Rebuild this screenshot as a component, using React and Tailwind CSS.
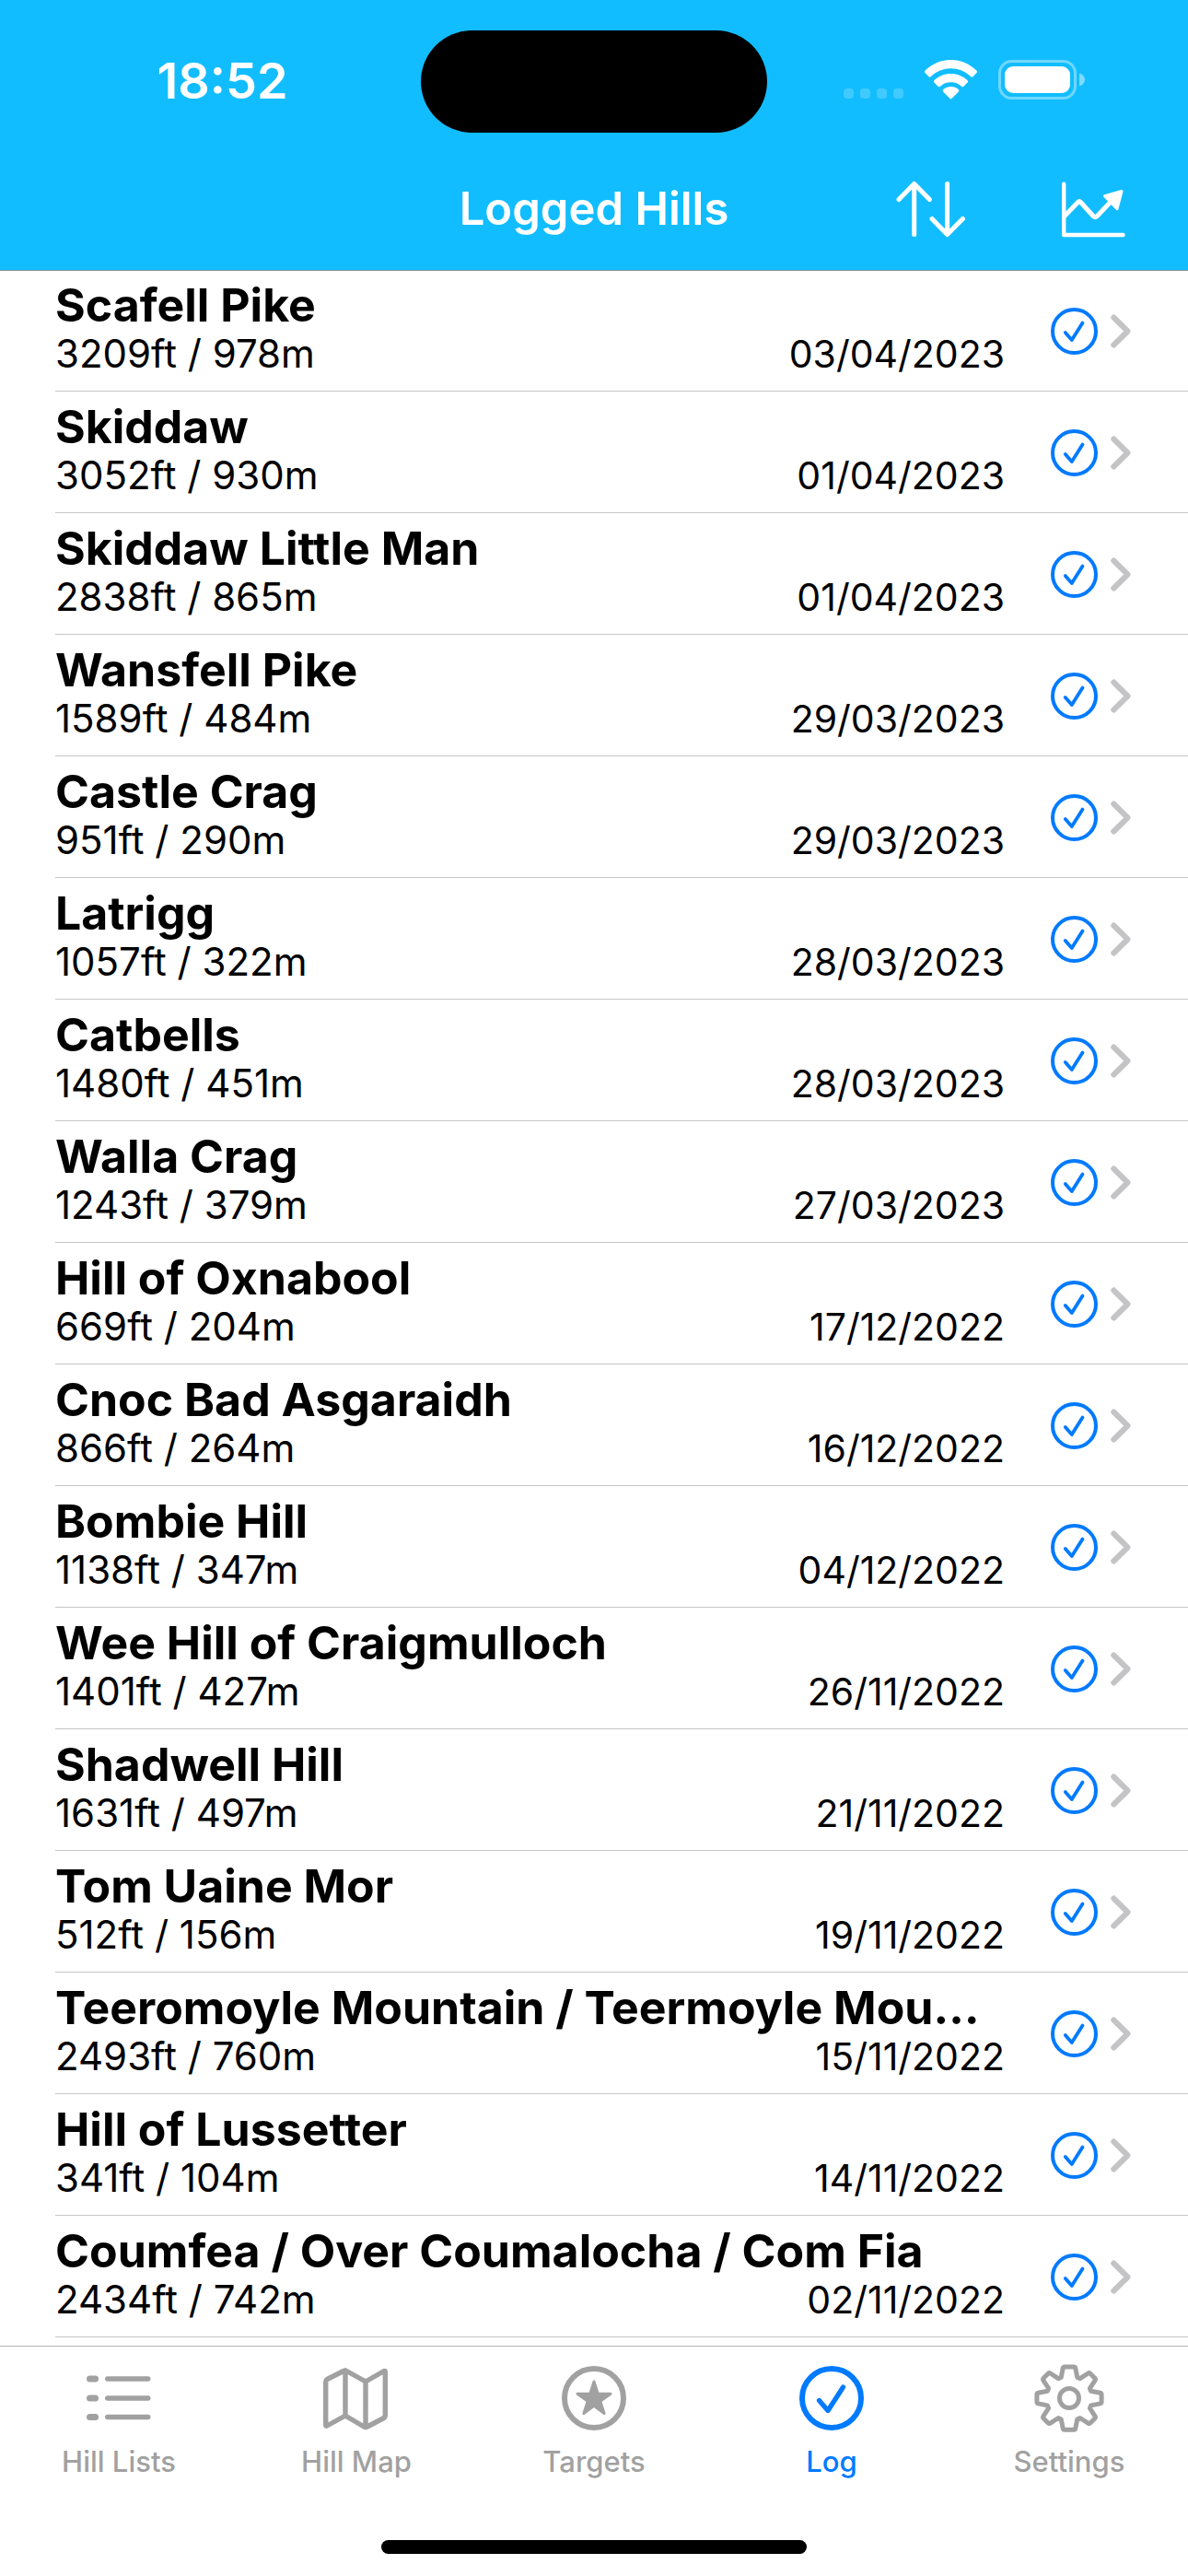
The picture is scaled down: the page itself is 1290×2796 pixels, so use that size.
const hills = [
  ["Scafell Pike", "3209ft / 978m", "03/04/2023"],
  ["Skiddaw", "3052ft / 930m", "01/04/2023"],
  ["Skiddaw Little Man", "2838ft / 865m", "01/04/2023"],
  ["Wansfell Pike", "1589ft / 484m", "29/03/2023"],
  ["Castle Crag", "951ft / 290m", "29/03/2023"],
  ["Latrigg", "1057ft / 322m", "28/03/2023"],
  ["Catbells", "1480ft / 451m", "28/03/2023"],
  ["Walla Crag", "1243ft / 379m", "27/03/2023"],
  ["Hill of Oxnabool", "669ft / 204m", "17/12/2022"],
  ["Cnoc Bad Asgaraidh", "866ft / 264m", "16/12/2022"],
  ["Bombie Hill", "1138ft / 347m", "04/12/2022"],
  ["Wee Hill of Craigmulloch", "1401ft / 427m", "26/11/2022"],
  ["Shadwell Hill", "1631ft / 497m", "21/11/2022"],
  ["Tom Uaine Mor", "512ft / 156m", "19/11/2022"],
  ["Teeromoyle Mountain / Teermoyle Mou…", "2493ft / 760m", "15/11/2022"],
  ["Hill of Lussetter", "341ft / 104m", "14/11/2022"],
  ["Coumfea / Over Coumalocha / Com Fia", "2434ft / 742m", "02/11/2022"],
];

function StatusIcons() {
  return (
    <svg width="264" height="48" viewBox="916 64 264 48" fill="none" aria-hidden="true">
      <g fill="#fff" fillOpacity="0.2">
        <rect x="916" y="96" width="11" height="11" rx="4" />
        <rect x="934" y="96" width="11" height="11" rx="4" />
        <rect x="952" y="96" width="11" height="11" rx="4" />
        <rect x="970" y="96" width="11" height="11" rx="4" />
      </g>
      <g fill="#fff">
        <path d="M1032.500 65c10.800 0 20.500 4.300 27.800 11.500a2 2 0 0 1 0 2.800l-3.600 3.700a1.800 1.800 0 0 1-2.600 0a31 31 0 0 0-43.200 0a1.800 1.800 0 0 1-2.600 0l-3.600-3.700a2 2 0 0 1 0-2.800C1012 69.300 1021.700 65 1032.500 65z" />
        <path d="M1032.500 80c6.900 0 13.200 2.700 17.900 7a2 2 0 0 1 0 2.800l-3.900 3.900a1.800 1.800 0 0 1-2.500 0a17 17 0 0 0-23 0a1.800 1.800 0 0 1-2.500 0l-3.900-3.900a2 2 0 0 1 0-2.800a26.500 26.500 0 0 1 17.900-7z" />
        <path d="M1032.500 94c3.200 0 6.100 1.200 8.200 3a1.800 1.800 0 0 1 0 2.700l-7 7a1.700 1.700 0 0 1-2.400 0l-7-7a1.800 1.800 0 0 1 0-2.700a12.500 12.500 0 0 1 8.200-3z" />
      </g>
      <rect x="1085.500" y="66.500" width="82" height="40" rx="13" stroke="#fff" strokeOpacity="0.4" strokeWidth="3" />
      <rect x="1091" y="72" width="71" height="29" rx="9" fill="#fff" />
      <path d="M1172 79.500c3.500 1 6 4 6 7s-2.500 6-6 7z" fill="#fff" fillOpacity="0.45" />
    </svg>
  );
}

function SortIcon() {
  return (
    <svg width="76" height="66" viewBox="972 194 76 66" fill="none" stroke="#fff" strokeWidth="5" strokeLinecap="round" strokeLinejoin="round" aria-hidden="true">
      <path d="M991.700 254.500V200M975 216.500l16.700-17l16.700 17M1027.600 199.500v54M1011 237.500l16.600 17l16.800-17" />
    </svg>
  );
}

function ChartIcon() {
  return (
    <svg width="72" height="66" viewBox="1151 194 72 66" fill="none" stroke="#fff" strokeWidth="5" strokeLinecap="round" strokeLinejoin="round" aria-hidden="true">
      <path d="M1155.200 199.700V255H1219.500" strokeWidth="4.400" />
      <path d="M1156 234.500l14.500-15q1.500-1.500 3 0l14 15.500q1.700 1.500 3.400 0L1208 217" />
      <path d="M1218 207.500l-18.500 5.200l13.500 14z" fill="#fff" strokeWidth="3" />
    </svg>
  );
}

function RowCheck() {
  return (
    <svg width="51" height="51" viewBox="0 0 51 51" fill="none" stroke="#007aff" strokeWidth="4" strokeLinecap="round" strokeLinejoin="round" aria-hidden="true">
      <circle cx="25.500" cy="25.500" r="23.500" />
      <path d="M15.800 27l7 8L34.500 16.500" strokeWidth="3.800" />
    </svg>
  );
}

function Chevron() {
  return (
    <svg width="22" height="37" viewBox="0 0 22 37" fill="none" stroke="#c4c4c6" strokeWidth="6" strokeLinecap="round" strokeLinejoin="round" aria-hidden="true">
      <path d="M3.300 3.500l15.200 15l-15.200 15" />
    </svg>
  );
}

function ListIcon() {
  return (
    <svg width="76" height="76" viewBox="90 2565 76 76" fill="currentColor" aria-hidden="true">
      {[2582, 2603, 2623.5].map((y) => (
        <g key={y}>
          <rect x="93" y={y - 3.5} width="13" height="7" rx="3.500" />
          <rect x="113" y={y - 2.8} width="49.500" height="5.600" rx="2.800" />
        </g>
      ))}
    </svg>
  );
}

function MapIcon() {
  return (
    <svg width="76" height="76" viewBox="349 2565 76 76" fill="none" stroke="currentColor" strokeWidth="5.400" strokeLinecap="round" strokeLinejoin="round" aria-hidden="true">
      <path d="M353.700 2585q0-1.500 1.500-2.500L373 2573.500q1.700-1 3.400 0L397 2585l20-11.500q1.300-.5 1.300 1V2622q0 1.500-1.500 2.500L398.700 2634q-1.700 1-3.400 0L375 2622l-20 11q-1.300.5-1.300-1zM375 2573v49M397 2585v49" />
    </svg>
  );
}

function StarIcon() {
  return (
    <svg width="76" height="76" viewBox="0 0 76 76" fill="none" aria-hidden="true">
      <circle cx="38" cy="38" r="32" stroke="currentColor" strokeWidth="6" />
      <path d="M38 20l4.200 13.200h13.800l-11.200 8.100l4.300 13.200L38 46.400l-11.100 8.100l4.300-13.200L20 33.200h13.800z" fill="currentColor" stroke="currentColor" strokeWidth="3" strokeLinejoin="round" />
    </svg>
  );
}

function LogIcon() {
  return (
    <svg width="76" height="76" viewBox="0 0 76 76" fill="none" stroke="currentColor" strokeLinecap="round" strokeLinejoin="round" aria-hidden="true">
      <circle cx="38" cy="38" r="32" strokeWidth="6" />
      <path d="M24.500 40.500L34 51.500L50.500 26" strokeWidth="5.200" />
    </svg>
  );
}

function GearIcon() {
  return (
    <svg width="76" height="76" viewBox="1122.500 2565.500 76 76" fill="none" stroke="currentColor" strokeWidth="5" strokeLinejoin="round" aria-hidden="true">
      <circle cx="1160.500" cy="2603.500" r="10.500" />
      <path d="M1155.500 2569.500h10q1.500 0 1.800 1.500l2 10l3 1.200l8.700-5.700q1.200-.8 2.300.3l5 5q1.100 1.100.3 2.300l-5.700 8.700l1.200 3l10 2q1.500.3 1.500 1.800v8q0 1.500-1.500 1.800l-10 2l-1.200 3l5.700 8.700q.8 1.200-.3 2.300l-5 5q-1.100 1.100-2.300.3l-8.700-5.700l-3 1.200l-2 10q-.3 1.500-1.800 1.500h-10q-1.500 0-1.800-1.500l-2-10l-3-1.200l-8.700 5.700q-1.200.8-2.300-.3l-5-5q-1.100-1.100-.3-2.300l5.700-8.700l-1.200-3l-10-2q-1.500-.3-1.500-1.800v-8q0-1.500 1.500-1.800l10-2l1.200-3l-5.700-8.700q-.8-1.200.3-2.300l5-5q1.100-1.100 2.300-.3l8.700 5.700l3-1.200l2-10q.3-1.500 1.800-1.500z" />
    </svg>
  );
}

const tabs = [
  ["Hill Lists", ListIcon],
  ["Hill Map", MapIcon],
  ["Targets", StarIcon],
  ["Log", LogIcon],
  ["Settings", GearIcon],
];

export default function App() {
  return (
    <div className="flex min-h-screen flex-col bg-white font-['Inter',sans-serif] text-black">
      <header className="border-b border-[#8a8f94] bg-[#12bdff] text-white">
        <div className="grid h-[176px] grid-cols-[1fr_auto_1fr] items-center">
          <div className="pl-[26px] text-center text-[54px] leading-[60px] font-semibold">18:52</div>
          <div className="h-[111px] w-[376px] rounded-full bg-black" />
          <div className="flex justify-end pr-[110px]">
            <StatusIcons />
          </div>
        </div>
        <div className="grid h-[117px] grid-cols-[1fr_auto_1fr] items-start pt-[18px]">
          <span />
          <h1 className="pt-[2px] text-[49px] leading-[62px] font-semibold">Logged Hills</h1>
          <div className="flex justify-end gap-[102px] pr-[67px]">
            <button type="button" aria-label="Sort">
              <SortIcon />
            </button>
            <button type="button" aria-label="Statistics">
              <ChartIcon />
            </button>
          </div>
        </div>
      </header>

      <main className="-mt-px grow">
        <ul>
          {hills.map(([name, height, date]) => (
            <li key={name} className="pl-[60px]">
              <a href="#hill" className="flex h-[132px] items-center border-b border-[#c6c6c8] pr-[62px]">
                <div className="min-w-0 grow self-start pt-[7px]">
                  <h2 className="truncate text-[50px] leading-[62px] font-bold">{name}</h2>
                  <div className="flex items-baseline justify-between leading-[44px]">
                    <span className="text-[42px]">{height}</span>
                    <span className="text-[41px]">{date}</span>
                  </div>
                </div>
                <div className="flex shrink-0 items-center gap-[14px] pt-[2px] pl-[50px]">
                  <RowCheck />
                  <Chevron />
                </div>
              </a>
            </li>
          ))}
        </ul>
      </main>

      <footer className="border-t border-[#b3b3b3] pb-6">
        <nav className="grid grid-cols-5">
          {tabs.map(([label, Icon]) => (
            <button
              key={label}
              type="button"
              aria-current={label === "Log" ? "page" : undefined}
              className={
                label === "Log"
                  ? "flex flex-col items-center pt-[18px] text-[#007aff]"
                  : "flex flex-col items-center pt-[18px] text-[#a1a1a1]"
              }
            >
              <Icon />
              <span className="pt-3 text-[31px] leading-[38px] font-medium">{label}</span>
            </button>
          ))}
        </nav>
        <div className="mx-auto mt-[66px] h-[15px] w-[462px] rounded-full bg-black" />
      </footer>
    </div>
  );
}
